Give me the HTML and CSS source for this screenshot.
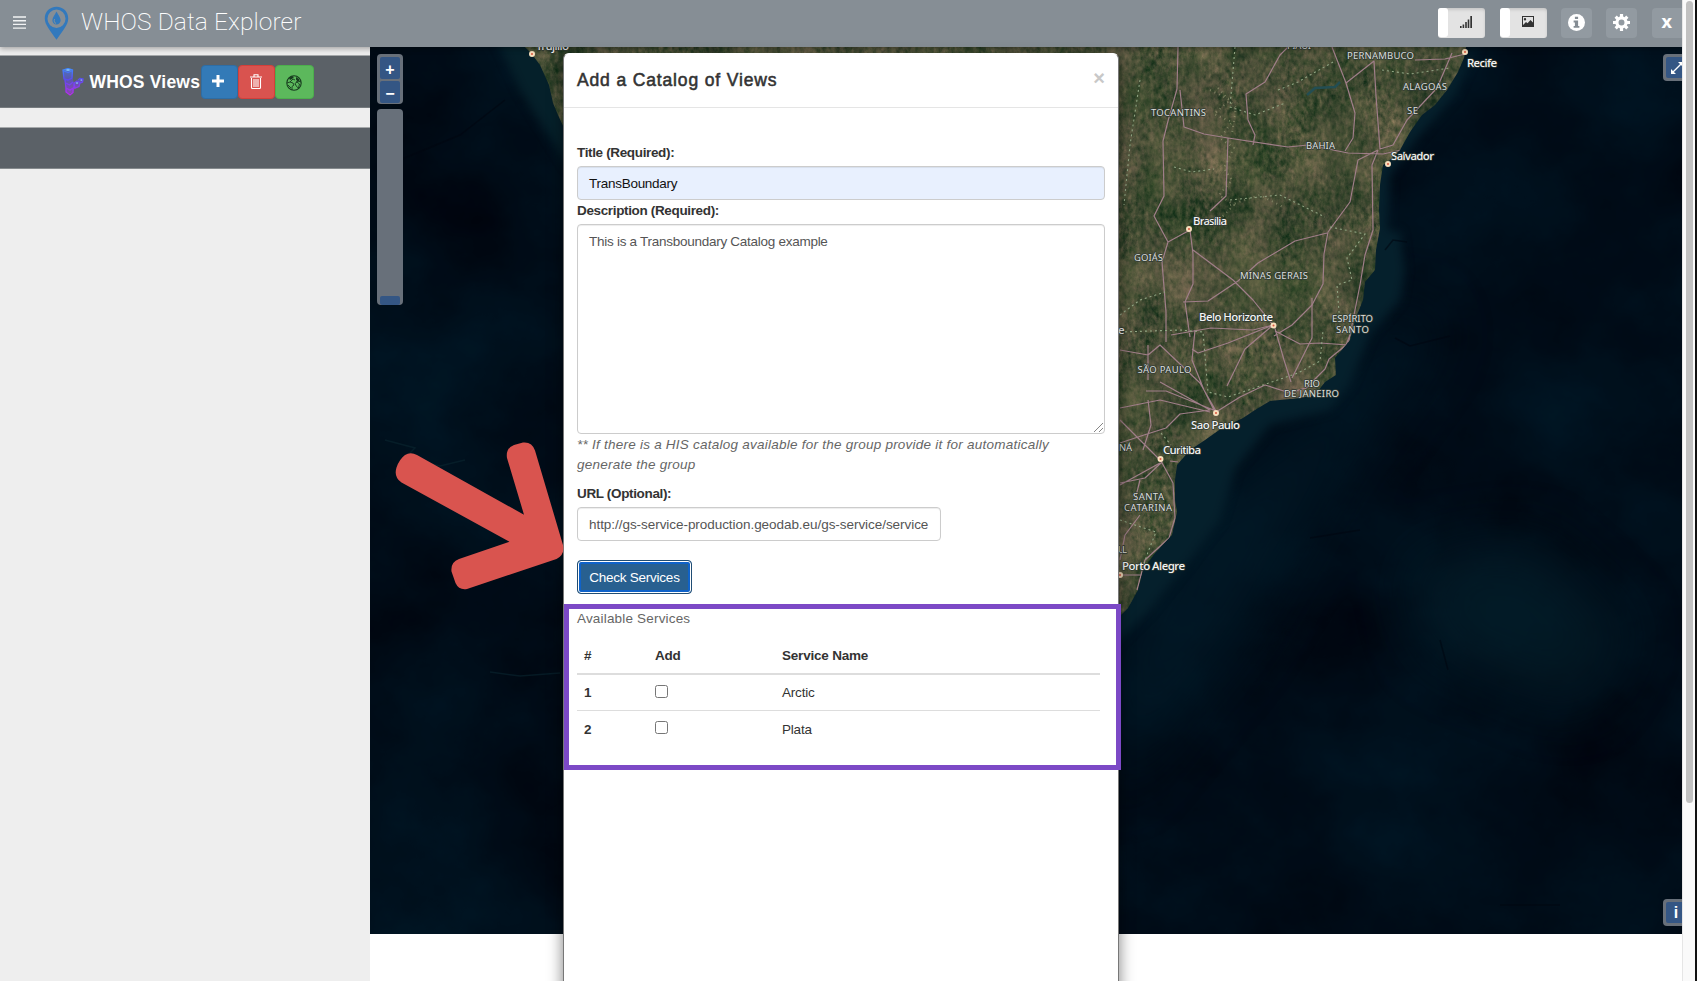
FILE: index.html
```html
<!DOCTYPE html>
<html lang="en">
<head>
<meta charset="utf-8">
<title>WHOS Data Explorer</title>
<link rel="stylesheet" href="styles.css">
</head>
<body>
<div class="page">
<div class="app">
  <header class="topbar">
    <svg class="menu-icon" viewBox="0 0 13 13"><path d="M0 1h13M0 4.7h13M0 8.4h13M0 12.1h13"/></svg>
    <svg class="brand-pin" viewBox="0 0 26 36"><path fill="#3279bd" fill-rule="evenodd" d="M13 1C6 1 .8 6.200.8 13.200c0 7 6.200 12.800 12.200 22.300 6-9.500 12.200-15.300 12.200-22.300C25.200 6.200 20 1 13 1zm0 2.900a9.400 9.600 0 1 1 0 19.200 9.400 9.600 0 0 1 0-19.200z"/><path fill="#3279bd" d="M13 6c-1.500 3.500-4.300 6-4.300 9.200a4.300 4.300 0 0 0 8.600 0C17.300 12 14.500 9.500 13 6z"/><path d="M11 14c-1 2 0 4 1.500 4.500" stroke="#87929a" fill="none"/></svg>
    <h1 class="brand">WHOS Data Explorer</h1>
    <div class="tools">
      <div class="toggle"><span class="handle"></span><svg viewBox="0 0 12 12" width="12" height="12"><path fill="#333" d="M0 10h1.600v2H0zM2.600 8.500h1.600V12H2.600zM5.200 6h1.600v6H5.200zM7.700 3.500h1.600V12H7.700zM10.300 0H12v12h-1.700z"/></svg></div>
      <div class="toggle"><span class="handle"></span><svg viewBox="0 0 12 11" width="12" height="11"><path fill="#333" fill-rule="evenodd" d="M0 0h12v11H0zM1 1v8l3-3 1.500 1.300L8.500 4 11 6.500V1zM3 2a1.200 1.200 0 1 1 0 2.400A1.200 1.200 0 0 1 3 2z"/></svg></div>
      <div class="tool"><svg viewBox="0 0 16 16" width="17" height="17"><circle cx="8" cy="8" r="8" fill="#fff"/><path fill="#858d94" d="M6.500 2.500h3v2.300h-3zM5.300 6.200h4.200v5h1.200v1.700H5.300v-1.700h1.200V7.900H5.300z"/></svg></div>
      <div class="tool"><svg viewBox="-8 -8 16 16" width="17" height="17"><circle r="4.300" fill="none" stroke="#fff" stroke-width="3"/><path stroke="#fff" stroke-width="3" d="M0-8v3M0 8V5M-8 0h3M8 0H5M-5.500-5.500l2 2M5.500 5.500l-2-2M-5.500 5.500l2-2M5.500-5.500l-2 2"/></svg></div>
      <div class="tool last">x</div>
    </div>
  </header>
  <div class="main">
    <aside class="sidebar">
      <div class="views-bar">
        <svg class="views-icon" viewBox="0 0 22 28"><defs><linearGradient id="vg" gradientUnits="userSpaceOnUse" x1="0" y1="0" x2="0" y2="28"><stop stop-color="#3f8bff"/><stop offset=".4" stop-color="#5a4cf0"/><stop offset="1" stop-color="#c12af0"/></linearGradient></defs><path fill="url(#vg)" fill-opacity=".55" d="M1 2l5-1.500L10.500 2v8l1.500 5 1-.5 3-1.500 1.500-2 2.500-1 1.500 1.500-.5 2.500-3 1.500-1 3-4 2-3 4-2.500 1.500L4 24l-.5-8L2 11z"/><path fill="none" stroke="url(#vg)" stroke-width="1.300" d="M1 2l5-1.500L10.500 2 10 10l-4 2-4-1zM1 2.500L6 4.500l4.500-2M3 12l1 8 4 2 4-2.500V15M4 20v4l4 3 3-2.500V20M12 15l3-2 3 1.500-1 4-4 1.500zM16 12l2-1.500 3 .5-.5 3-2 1M4 15l3.500 2L11 14"/><path fill="#7fc4ff" d="M3 2l3-1 3 1-3 1z"/><path fill="#8bb0ff" d="M13.500 15l1.500-1 1.500 1-1.500 1zM18 12l1.500-.7 1 .7-1 1z"/></svg>
        <span class="views-title">WHOS Views</span>
        <button class="sq blue"><svg viewBox="0 0 12 12" width="12" height="12"><path stroke="#fff" stroke-width="3" d="M6 0v12M0 6h12"/></svg></button>
        <button class="sq red"><svg viewBox="0 0 12 15" width="12" height="15" fill="none" stroke="#fff"><path d="M0 3h12M4 2.500V.7h4v1.800M1.500 4v9.500q0 1 1 1h7q1 0 1-1V4M4 5v8M6 5v8M8 5v8" stroke-width="1.100"/></svg></button>
        <button class="sq green"><svg viewBox="0 0 16 16" width="16" height="16" fill="none" stroke="#173a1e"><circle cx="8" cy="8" r="7.200" stroke-width="1.100"/><path fill="#173a1e" stroke="none" d="M3 3l3-2 2 1-2 2-2 1zM10 2l3 2 .5 2-2 .5-1.500-2z"/><path stroke-width=".9" d="M1 8l3-1 3 1 1 2-2 1.500L6 15M4 7l3-3 2 1M10 7l2-1 3 1M9 8.500l2-1.500 2.500 2-1 4-2-1.500zM2 10l3 3"/></svg></button>
      </div>
      <div class="group-bar"></div>
    </aside>
    <section class="map">
      <svg class="map-canvas" viewBox="370 47 1312 887">
        <defs>
          <filter id="terrain" x="0" y="0" width="100%" height="100%" color-interpolation-filters="sRGB">
            <feTurbulence type="fractalNoise" baseFrequency=".022 .016" numOctaves="3" seed="8" result="broad"/>
            <feTurbulence type="fractalNoise" baseFrequency=".22 .15" numOctaves="4" seed="3" result="fine"/>
            <feComposite in="broad" in2="fine" operator="arithmetic" k2=".55" k3=".45"/>
            <feColorMatrix values=".7 .2 0 0 -.17  .4 .2 0 0 .01  .4 .1 0 0 -.04  0 0 0 0 1"/>
            <feComposite in2="SourceGraphic" operator="in"/>
          </filter>
          <filter id="seabed" x="0" y="0" width="100%" height="100%" color-interpolation-filters="sRGB">
            <feTurbulence type="fractalNoise" baseFrequency=".006 .007" numOctaves="6" seed="21"/>
            <feColorMatrix values="0 0 0 0 0  .11 0 0 0 -.001  .14 0 0 0 .03  0 0 0 0 1"/>
          </filter>
          <filter id="soft" color-interpolation-filters="sRGB"><feGaussianBlur stdDeviation="5"/></filter>
          <filter id="wide" x="-50%" y="-50%" width="200%" height="200%" color-interpolation-filters="sRGB"><feGaussianBlur stdDeviation="30"/></filter>
          <clipPath id="land"><path d="M1050 47H1466L1464 58 1458 72 1447 90 1435 105 1422 115 1410 132 1400 150 1390 160 1383 165 1380 185 1379 210 1380 228 1376 250 1375 270 1365 282 1363 300 1355 320 1350 340 1335 358 1336 375 1325 382 1315 395 1300 398 1270 401 1255 410 1243 418 1222 428 1205 440 1190 450 1177 465 1175 480 1175 500 1177 512 1172 535 1155 553 1143 570 1138 590 1128 608 1118 618H1050z"/></clipPath>
        </defs>
        <rect x="370" y="47" width="1312" height="887" fill="#000b17"/>
        <rect x="370" y="47" width="1312" height="887" filter="url(#seabed)" opacity=".85"/>
        <g filter="url(#wide)" opacity=".7">
          <path fill="#021b29" d="M1110 650L1180 520 1330 400 1400 300 1440 330 1340 470 1240 640 1110 800z"/>
          <path fill="#04202c" d="M1410 560l120-20 100 90-50 80-150-60z"/>
        </g>
        <g filter="url(#soft)">
          <path fill="#05202a" d="M495 35H570V170L545 130 520 90z"/>
          <path fill="#05202c" d="M1480 40L1455 95 1420 135 1390 175 1388 230 1400 232 1405 270 1400 300 1370 335 1350 385 1330 410 1270 425 1235 470 1220 520 1190 560 1150 610 1110 650V560L1170 450 1330 350 1370 160z"/>
        </g>
        <g fill="none" stroke="#000710" stroke-width="1.500" opacity=".6"><path d="M400 160l60-25 45-35M1310 538l50-8M1395 338l15 8 40-10M1385 250l8-10 14 2M1440 640l8 30M1500 905h60"/><path stroke="#0a2630" d="M385 440l30 8-10 10 35 8 25-6M490 672l30 4 40-3"/></g>
        <path fill="#41502f" filter="url(#terrain)" d="M525 47H1466L1464 58 1458 72 1447 90 1435 105 1422 115 1410 132 1400 150 1390 160 1383 165 1380 185 1379 210 1380 228 1376 250 1375 270 1365 282 1363 300 1355 320 1350 340 1335 358 1336 375 1325 382 1315 395 1300 398 1270 401 1255 410 1243 418 1222 428 1205 440 1190 450 1177 465 1175 480 1175 500 1177 512 1172 535 1155 553 1143 570 1138 590 1128 608 1118 618V110H564V128L558 115 553 103 549 85 540 65 531 53z"/>
        <g clip-path="url(#land)" fill="none">
          <g stroke="#a07e89" stroke-width="1.200" stroke-linejoin="round">
            <path d="M1178 47l-1 42-9 32-5 20 1 55-10 20 14 26-6 20 4 50v30M1168 242l22-12 3 24v30l-8 18 5 35M1180 90l4 37 20 7 24 4 60 9 20-2 40 8 35 1 23-5M1288 47l-8 8-15 27-19 12 2 26 7 15-2 10M1228 138l-2 58-16 15M1332 47l14 36 9 30-2 25-8 13M1346 83l28-22 2 35 4 53 13-4 14-25 30-32 15-35M1415 60l30-1 20-5M1378 150l-20 10-8 42-22 30-4 22-1 30-11 21-20 20-18 11M1378 150l-6 15 1 65-8 25-5 30-8 40-4 20-28-2-20 1-25-13M1327 233l-32 8-37 22-20 18-30 20-25 1M1193 250l40 30 20 20 20 25-20 5-42-2-40 7"/>
            <path d="M1273 325l-45 18-30 10-6-4M1273 325l-28 24-18 37M1274 325l10 35 7 22M1312 298v40l-20 40M1350 335l-4 10-17 14-4 10-20 20M1195 330l-3 30 12 30 12 24M1120 350l28 5 12-10 40 38 16 28-50-20-20 0M1148 345v35M1216 412l24-15 25-12 25 8 15-5M1160 382l50 28-30 4-14 14-22 7-24 8M1120 408l40-8 50 12M1148 400l3 25-8 25M1120 420l42 42-17 16-25 5M1161 461l12 22 2 35-6 20-24 22-8 30M1160 463l-40 22M1170 461l8 1M1140 480l-5 20M1140 515l-15 20-5 25M1120 575h25"/>
          </g>
          <path stroke="#91a583" stroke-width="1.100" stroke-dasharray="2 3" d="M1140 80l-10 65-6 60M1235 47l-5 60 25 8 30-12M1278 90l20-8 35-20M1382 70l28 4 40-6M1174 167l18 5 22-3M1230 200l50-5 45 22M1330 227l35 7-18 24 5 22-15 5 3 40M1120 315l20-15 25-8M1120 332l60-2 23 2 5 60 20 5 70-24 22-12 3-30M1161 433l10 12M1120 520l36 12-8 20-5 15"/>
          <g stroke="#a2a47f" stroke-width="2" stroke-dasharray="1 4" opacity=".6"><path d="M1210 90l20 10-16 14 18 8-12 16 14 10-10 20 8 12-13 15 15 10-12 12M1218 88l18 20-4 25M1230 205l30-10 25 13"/></g>
        </g>
        <path d="M1307 95l8-7 20-1 5-5" fill="none" stroke="#234e53" stroke-width="2.500"/>
        <g fill="#d9583f" stroke="#f8dfbd" stroke-width="2"><circle cx="532" cy="54" r="2"/><circle cx="1465" cy="52" r="2"/><circle cx="1388" cy="164" r="2"/><circle cx="1189" cy="229" r="2"/><circle cx="1273.500" cy="325.500" r="2"/><circle cx="1216" cy="413" r="2"/><circle cx="1160.500" cy="459" r="2"/><circle cx="1120" cy="575" r="2"/></g>
        <g class="region"><text x="1347" y="59" textLength="67">PERNAMBUCO</text><text x="1403" y="90" textLength="44">ALAGOAS</text><text x="1407" y="113.500" textLength="11">SE</text><text x="1151" y="115.500" textLength="55">TOCANTINS</text><text x="1306" y="149" textLength="29">BAHIA</text><text x="1134" y="260.500" textLength="29">GOIÁS</text><text x="1240" y="278.500" textLength="68">MINAS GERAIS</text><text x="1332" y="321.500" textLength="41">ESPÍRITO</text><text x="1336" y="332.500" textLength="33">SANTO</text><text x="1137.500" y="372.500" textLength="54">SÃO PAULO</text><text x="1304" y="386.500" textLength="16">RIO</text><text x="1284" y="397" textLength="55">DE JANEIRO</text><text x="1119" y="451" textLength="13">NÁ</text><text x="1133" y="500" textLength="31">SANTA</text><text x="1124" y="511" textLength="48">CATARINA</text><text x="1118" y="552.500" textLength="9">UL</text><text x="1287" y="49" textLength="24">PIAUÍ</text></g>
        <g class="city"><text x="1467" y="66.500" textLength="30">Recife</text><text x="1391" y="160" textLength="43">Salvador</text><text x="1193" y="224.500" textLength="34">Brasília</text><text x="1199" y="320.500" textLength="74">Belo Horizonte</text><text x="1191" y="428.500" textLength="49">Sao Paulo</text><text x="1163" y="453.500" textLength="38">Curitiba</text><text x="1122" y="570" textLength="63">Porto Alegre</text><text x="1118" y="334">e</text><text x="536" y="50" textLength="33">Trujillo</text></g>
      </svg>
      <div class="map-controls">
        <div class="ctl zoomctl"><span>+</span><span>−</span></div>
        <div class="ctl slider"><i></i></div>
      </div>
      <div class="ctl corner full"><span><svg viewBox="0 0 14 14" width="14" height="14"><path d="M2 12L12 2" stroke="#fff" stroke-width="1.300"/><path fill="#fff" d="M8 1h5v5zM1 8v5h5z"/></svg></span></div>
      <div class="ctl corner info"><span>i</span></div>
    </section>
  </div>

  <div class="modal">
    <div class="modal-head"><h2>Add a Catalog of Views</h2><span class="close">×</span></div>
    <div class="modal-body">
      <label>Title (Required):</label>
      <div class="field filled">TransBoundary</div>
      <label>Description (Required):</label>
      <div class="field area">This is a Transboundary Catalog example
        <svg class="grip" viewBox="0 0 9 9"><path d="M0 9L9 0M5 9l4-4" stroke="#777" stroke-width=".9"/></svg></div>
      <p class="note">** If there is a HIS catalog available for the group provide it for automatically<br>generate the group</p>
      <label>URL (Optional):</label>
      <div class="field url">http://gs-service-production.geodab.eu/gs-service/service</div>
      <button class="check">Check Services</button>
    </div>
    <div class="services">
      <p>Available Services</p>
      <div class="row head"><b>#</b><b>Add</b><b>Service Name</b></div>
      <div class="row one"><b>1</b><i class="box"></i><span>Arctic</span></div>
      <div class="row"><b>2</b><i class="box"></i><span>Plata</span></div>
    </div>
  </div>
  <svg class="arrow" viewBox="390 436 176 158"><path d="M417 455L524 514.700 507 458Q505.500 448 514 445L523 442.500Q532 441.500 535 450.500L563 545Q565 555 556.500 559L467 589Q459 590.500 455.500 583L451.500 571.500Q450.500 562 459 559L509.500 541.700 401.500 482.500Q393.500 477 396.500 467.500 399.500 459 405 455 410.500 451.500 417 455z"/></svg>
</div>
<div class="scroll"><i></i></div>
</div>
</body>
</html>
```
FILE: styles.css
```css
* { box-sizing: border-box; }
body { margin: 0; background: #fff; font-family: "Liberation Sans", Arial, sans-serif; font-size: 13.500px; color: #333; overflow: hidden; }
h1, h2, p { margin: 0; font-weight: normal; }
button { font: inherit; padding: 0; }
.page { display: flex; width: 1697px; height: 981px; border-right: 2px solid #111; }
.app { position: relative; width: 1682px; display: flex; flex-direction: column; overflow: hidden; }
.scroll { flex: 1; background: #fafafa; border-left: 1px solid #e6e6e6; padding: 1px 2px 0 3px; }
.scroll i { display: block; height: 802px; width: 7px; border-radius: 4px; background: #c1c1c1; }

.topbar { height: 47px; flex: none; display: flex; align-items: center; background: #868e95; padding-left: 13px; position: relative; z-index: 1; box-shadow: 0 2px 5px rgba(0,0,0,.3); }
.menu-icon { width: 13px; height: 13px; fill: none; stroke: #f2f3f4; stroke-width: 1.4; margin-top: -2px; }
.brand-pin { width: 25px; height: 36px; margin: -1px 12px 0 18px; }
.brand { font-family: Roboto, "Open Sans", sans-serif; font-weight: 200; font-size: 24.500px; color: #fff; white-space: nowrap; letter-spacing: .1px; margin-top: -5px; }
.tools { display: flex; margin-left: auto; align-items: center; margin-top: -2px; }
.toggle { width: 47px; height: 30px; margin-right: 15.500px; border-radius: 3px; background: #e3e3e3; display: flex; align-items: center; box-shadow: inset 0 2px 3px rgba(0,0,0,.12); }
.toggle svg { margin-left: 12px; margin-top: -2px; }
.handle { width: 10px; height: 29px; background: #fff; border-radius: 3px; }
.tool { width: 31px; height: 30px; border-radius: 4px; background: #929aa1; margin-right: 14.500px; display: flex; align-items: center; justify-content: center; color: #fff; font: bold 17px "DejaVu Sans", sans-serif; }
.toggle + .tool { margin-left: -2px; }
.tool.last { margin-right: 0; width: 30.500px; border-radius: 4px 0 0 4px; padding-bottom: 2px; }

.main { flex: 1; display: flex; min-height: 0; }
.sidebar { width: 370px; flex: none; background: #eee; padding-top: 8px; }
.views-bar { height: 53px; background: #5b6167; border-top: 1px solid #a5a8aa; border-bottom: 1px solid #777c80; display: flex; align-items: center; padding-left: 62px; }
.views-icon { width: 22px; height: 28px; margin-right: 5.500px; }
.views-title { width: 111px; font-weight: bold; font-size: 17.500px; letter-spacing: .2px; color: #fff; white-space: nowrap; padding-top: 1px; }
.sq { height: 34px; width: 37px; border-radius: 4px; border: 1px solid; display: flex; align-items: center; justify-content: center; margin-top: 1px; }
.sq svg { margin: -2px 2px 0 0; }
.blue { background: #337ab7; border-color: #2e6da4; }
.red { background: #d9534f; border-color: #d43f3a; }
.red svg { margin-right: 0; }
.green { width: 39px; background: #5cb85c; border-color: #4cae4c; }
.green svg { margin: 1px 0 0; }
.group-bar { margin-top: 19px; height: 42px; background: #5b6167; border-top: 1px solid #a5a8aa; border-bottom: 1px solid #858a8d; }

.map { position: relative; width: 1312px; height: 887px; overflow: hidden; }
.map-canvas { display: block; width: 1312px; height: 887px; }
.region, .city { font-family: "Noto Sans", "Open Sans", sans-serif; paint-order: stroke; stroke: #303a34; stroke-width: 1.500px; stroke-linejoin: round; }
.region { font-size: 9.500px; fill: #dcdedb; }
.city { font-size: 11.500px; fill: #f4f4f4; font-weight: 500; }
.map-controls { position: absolute; left: 7px; top: 7px; }
.ctl { background: #68707a; border-radius: 4px; }
.zoomctl { width: 26px; height: 50px; padding: 3px; display: flex; flex-direction: column; gap: 2px; }
.ctl span { flex: 1; background: #345684; color: #fff; font-weight: bold; font-size: 16px; display: flex; align-items: center; justify-content: center; border-radius: 2px; }
.zoomctl span { padding-top: 4px; }
.slider { width: 26px; height: 196px; margin-top: 5px; padding: 187px 3px 0; }
.slider i { display: block; height: 9px; background: #345684; border-radius: 2px; }
.corner { position: absolute; width: 28px; height: 27px; right: -9px; padding: 3px; display: flex; }
.full { top: 7px; }
.info { bottom: 8px; }
.info span { padding-right: 2px; }

.modal { position: absolute; left: 563px; top: 53px; width: 556px; height: 960px; background: #fff; border: 1px solid #777; border-top-color: #fff; border-radius: 6px 6px 0 0; box-shadow: 0 5px 15px rgba(0,0,0,.5); z-index: 2; }
.modal-head { height: 54px; border-bottom: 1px solid #e5e5e5; display: flex; justify-content: space-between; padding: 15px 13px 0 13px; }
.modal-head h2 { font-size: 17.500px; line-height: 22px; letter-spacing: .85px; -webkit-text-stroke: .55px #333; }
.close { font-size: 20px; font-weight: bold; line-height: 18px; color: #c8c8c8; }
.modal-body { height: 496px; padding: 34px 13px 0 13px; }
label { display: block; font-weight: bold; height: 24px; line-height: 21px; letter-spacing: -.35px; }
.field { height: 34px; border: 1px solid #ccc; border-radius: 4px; padding: 0 11px; line-height: 33px; color: #555; box-shadow: inset 0 1px 1px rgba(0,0,0,.075); white-space: nowrap; letter-spacing: -.27px; }
.filled { background: #e8f0fe; color: #111; }
.area { position: relative; height: 210px; }
.grip { position: absolute; width: 9px; height: 9px; right: 1px; bottom: 1px; }
.note { height: 49px; padding-top: 1px; font-style: italic; line-height: 19.500px; color: #666; white-space: nowrap; letter-spacing: .24px; }
.url { width: 364px; margin-bottom: 19px; letter-spacing: -.05px; }
.check { width: 115px; height: 34px; color: #fff; background: #286090; border: 1px solid #204d74; border-radius: 4px; box-shadow: inset 0 0 0 1px #fff, inset 0 0 0 3px #0f62c9; letter-spacing: -.25px; white-space: nowrap; }
.services { width: 557px; height: 166px; border: 5px solid #7c49c6; padding: 0 16px 0 8px; }
.services p { height: 28px; line-height: 19px; color: #666; letter-spacing: .18px; }
.row { display: grid; grid-template-columns: 70px 127px 1fr; height: 36px; align-items: center; padding-left: 7px; letter-spacing: -.2px; }
.head { height: 38px; border-bottom: 2px solid #ddd; }
.row.one { border-bottom: 1px solid #ddd; }
.row span { padding-left: 1px; }
.head b + b, .box { margin-left: 1px; }
.box { width: 13px; height: 13px; border: 1px solid #767676; border-radius: 2.500px; margin-top: -3px; }
.arrow { position: absolute; left: 390px; top: 436px; width: 176px; height: 158px; z-index: 3; fill: #d9544f; }
```
